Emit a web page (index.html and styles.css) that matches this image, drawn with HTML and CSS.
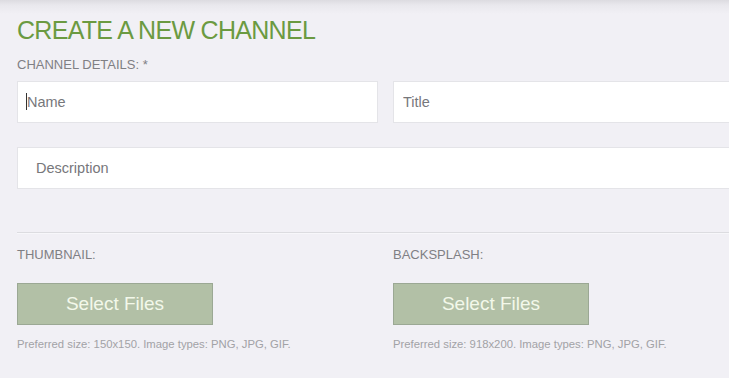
FILE: index.html
```html
<!DOCTYPE html>
<html lang="en">
<head>
<meta charset="utf-8">
<title>Create a new channel</title>
<link rel="stylesheet" href="styles.css">
</head>
<body>
<main class="page">
  <h1 class="title">CREATE A NEW CHANNEL</h1>
  <div class="section-label">CHANNEL DETAILS: *</div>
  <div class="row">
    <div class="field">
      <input class="input" type="text" placeholder="Name">
      <span class="caret"></span>
    </div>
    <div class="field">
      <input class="input" type="text" placeholder="Title">
    </div>
  </div>
  <div class="desc-row">
    <input class="input input-desc" type="text" placeholder="Description">
  </div>
  <div class="divider"></div>
  <div class="row uploads">
    <div class="upload">
      <div class="section-label">THUMBNAIL:</div>
      <button class="btn" type="button">Select Files</button>
      <div class="hint">Preferred size: 150x150. Image types: PNG, JPG, GIF.</div>
    </div>
    <div class="upload">
      <div class="section-label">BACKSPLASH:</div>
      <button class="btn" type="button">Select Files</button>
      <div class="hint">Preferred size: 918x200. Image types: PNG, JPG, GIF.</div>
    </div>
  </div>
</main>
</body>
</html>
```
FILE: styles.css
```css
html, body {
  margin: 0;
  padding: 0;
}
body {
  width: 729px;
  height: 378px;
  overflow: hidden;
  background: linear-gradient(to bottom, #dcdbe0 0px, #e9e8ed 5px, #f1f0f5 14px, #f1f0f5 100%);
  font-family: "Liberation Sans", Arial, sans-serif;
}
.page {
  padding: 15px 0 0 17px;
  width: 738px;
}
.title {
  margin: 0;
  font-size: 25px;
  line-height: 30px;
  font-weight: normal;
  letter-spacing: -0.7px;
  color: #6b9a41;
}
.section-label {
  margin-top: 12px;
  font-size: 13px;
  line-height: 15px;
  color: #7f7f84;
}
.row {
  display: grid;
  grid-template-columns: 361px 361px;
  column-gap: 15px;
  margin-top: 9px;
}
.field {
  position: relative;
}
.input {
  display: block;
  box-sizing: border-box;
  width: 100%;
  height: 42px;
  margin: 0;
  padding: 0 9px;
  border: 1px solid #e4e4e8;
  border-radius: 0;
  background: #fff;
  font-family: "Liberation Sans", Arial, sans-serif;
  font-size: 14.5px;
  color: #555;
  outline: none;
}
.input::placeholder {
  color: #77777b;
}
.caret {
  position: absolute;
  left: 9px;
  top: 12px;
  width: 1px;
  height: 17px;
  background: #333;
}
.desc-row {
  margin-top: 24px;
}
.input-desc {
  width: 738px;
  padding-left: 18px;
  font-size: 14.5px;
}
.divider {
  margin-top: 43px;
  height: 1px;
  background: #dcdce0;
  border-bottom: 1px solid #f7f7fa;
  width: 738px;
}
.uploads {
  margin-top: 0;
}
.upload .section-label {
  margin-top: 13px;
}
.btn {
  display: block;
  box-sizing: border-box;
  margin-top: 21px;
  width: 196px;
  height: 42px;
  padding: 0;
  background: #b2c0a6;
  border: 1px solid #9ba894;
  border-radius: 0;
  font-family: "Liberation Sans", Arial, sans-serif;
  font-size: 19px;
  color: #f3f8ea;
}
.hint {
  margin-top: 13px;
  font-size: 11.3px;
  line-height: 13px;
  color: #a2a2a6;
}
```
